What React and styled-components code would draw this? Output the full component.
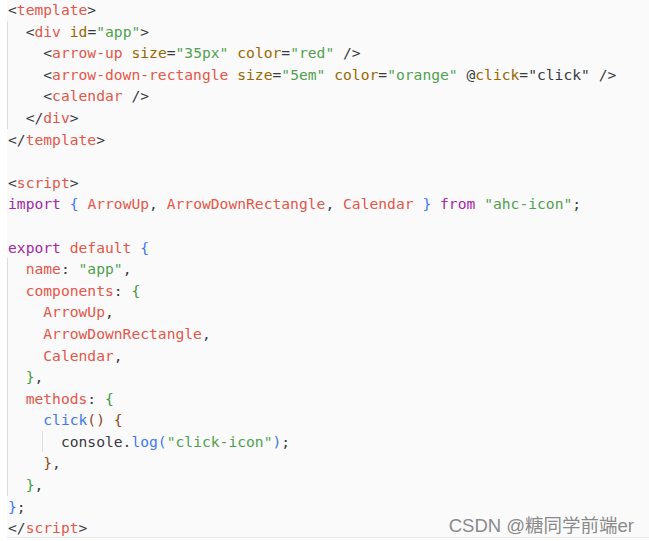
import React from 'react';
import styled, { createGlobalStyle, css } from 'styled-components';

const GlobalStyle = createGlobalStyle`
  html, body {
    margin: 0;
    padding: 0;
    background: #ffffff;
  }
`;

const C = {
  tag: '#e45649',
  attr: '#986801',
  str: '#50a14f',
  text: '#383a42',
  kw: '#a626a4',
  blue: '#4078f2',
  brown: '#8a4a1c',
  green: '#3f9a3f',
};

const Page = styled.div`
  position: relative;
  width: 649px;
  height: 541px;
  overflow: hidden;
`;

const CodeBlock = styled.pre`
  margin: 0 0 0 7px;
  height: 539px;
  box-sizing: border-box;
  padding: 0 0 0 1px;
  background: #fafafa;
  border-bottom: 1px solid #e6e6e6;
  font-family: 'DejaVu Sans Mono', 'Liberation Mono', monospace;
  font-size: 14.65px;
  line-height: 21.6px;
  color: ${C.text};
  white-space: pre;
`;

const guideLine = (x) => css`
  content: '';
  position: absolute;
  left: ${x}px;
  top: 0;
  bottom: 0;
  border-left: 1px solid #dcdcdc;
`;

const Line = styled.div`
  position: relative;
  height: 21.6px;
  margin-top: ${(p) => (p.$first ? '-1px' : '0')};
  ${(p) => p.$guide != null && css`&::before { ${guideLine(p.$guide)} }`}
  ${(p) => p.$inner != null && css`&::after { ${guideLine(p.$inner)} }`}
`;

const T = styled.span`
  color: ${(p) => p.$c};
`;

const Watermark = styled.div`
  position: absolute;
  right: 15px;
  bottom: 4px;
  font-family: 'Liberation Sans', 'Noto Sans CJK SC', sans-serif;
  font-size: 18.5px;
  color: #8a8a8a;
  text-shadow: 0 0 1px #ffffff;
`;

const tag = (name) => <T $c={C.tag}>{name}</T>;
const attr = (name) => <T $c={C.attr}>{name}</T>;
const str = (s) => <T $c={C.str}>{s}</T>;
const kw = (s) => <T $c={C.kw}>{s}</T>;
const red = (s) => <T $c={C.tag}>{s}</T>;
const blue = (s) => <T $c={C.blue}>{s}</T>;
const brown = (s) => <T $c={C.brown}>{s}</T>;
const green = (s) => <T $c={C.green}>{s}</T>;

export default function App() {
  return (
    <Page>
      <GlobalStyle />
      <CodeBlock>
        <Line $first>&lt;{tag('template')}&gt;</Line>
        <Line $guide={-1}>  &lt;{tag('div')} {attr('id')}={str('"app"')}&gt;</Line>
        <Line $guide={-1}>
          {'    '}&lt;{tag('arrow-up')} {attr('size')}={str('"35px"')} {attr('color')}={str('"red"')} /&gt;
        </Line>
        <Line $guide={-1}>
          {'    '}&lt;{tag('arrow-down-rectangle')} {attr('size')}={str('"5em"')} {attr('color')}=
          {str('"orange"')} @{attr('click')}="click" /&gt;
        </Line>
        <Line $guide={-1}>{'    '}&lt;{tag('calendar')} /&gt;</Line>
        <Line $guide={-1}>  &lt;/{tag('div')}&gt;</Line>
        <Line>&lt;/{tag('template')}&gt;</Line>
        <Line />
        <Line>&lt;{tag('script')}&gt;</Line>
        <Line>
          {kw('import')} {blue('{')} {red('ArrowUp')}, {red('ArrowDownRectangle')}, {red('Calendar')}{' '}
          {blue('}')} {kw('from')} {str('"ahc-icon"')};
        </Line>
        <Line />
        <Line>
          {kw('export')} {red('default')} {blue('{')}
        </Line>
        <Line $guide={-1}>
          {'  '}{red('name')}: {str('"app"')},
        </Line>
        <Line $guide={-1}>
          {'  '}{red('components')}: {green('{')}
        </Line>
        <Line $guide={-1}>{'    '}{red('ArrowUp')},</Line>
        <Line $guide={-1}>{'    '}{red('ArrowDownRectangle')},</Line>
        <Line $guide={-1}>{'    '}{red('Calendar')},</Line>
        <Line $guide={-1}>{'  '}{green('}')},</Line>
        <Line $guide={-1}>
          {'  '}{red('methods')}: {green('{')}
        </Line>
        <Line $guide={-1}>
          {'    '}{blue('click')}{brown('() {')}
        </Line>
        <Line $guide={-1} $inner={34}>
          {'      '}console.{blue('log')}{blue('(')}{str('"click-icon"')}{blue(')')};
        </Line>
        <Line $guide={-1}>{'    '}{brown('}')},</Line>
        <Line $guide={-1}>{'  '}{green('}')},</Line>
        <Line>{blue('}')};</Line>
        <Line>&lt;/{tag('script')}&gt;</Line>
      </CodeBlock>
      <Watermark>CSDN @糖同学前端er</Watermark>
    </Page>
  );
}
